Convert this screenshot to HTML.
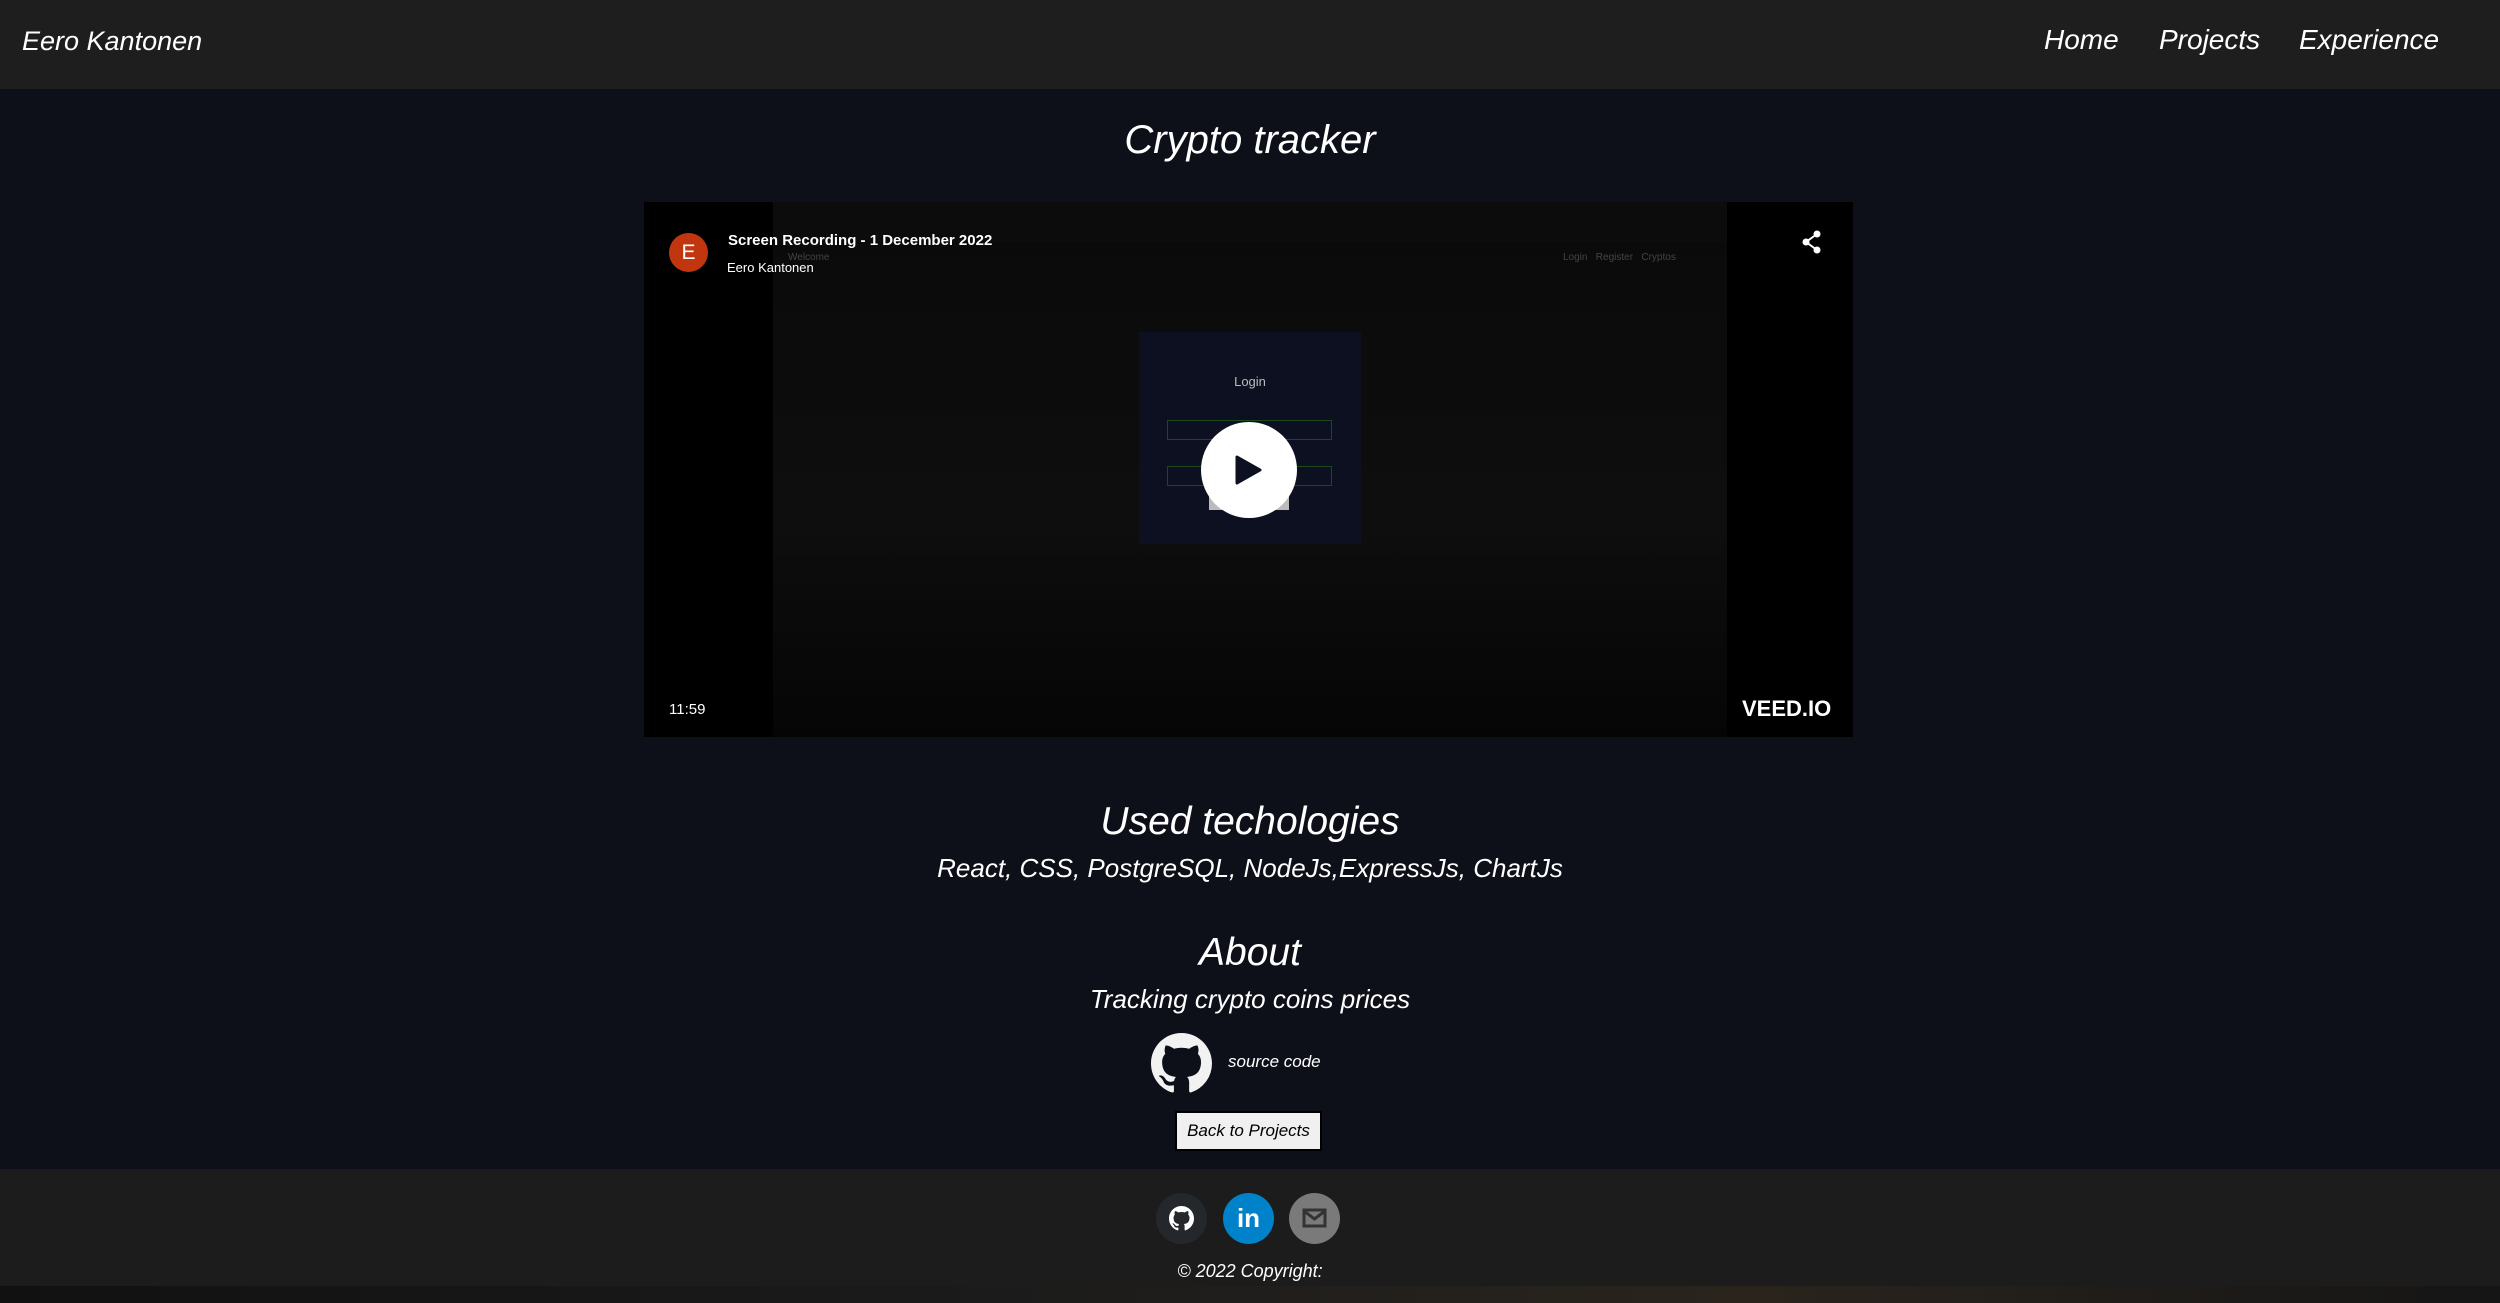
<!DOCTYPE html>
<html><head><meta charset="utf-8"><style>
*{margin:0;padding:0;box-sizing:border-box}
html,body{width:2500px;height:1303px;overflow:hidden;background:#0d1018;font-family:"Liberation Sans",sans-serif;color:#fff;font-style:italic}
.nav{position:absolute;left:0;top:0;width:2500px;height:89px;background:#1e1e1e}
.brand{position:absolute;left:22px;top:26px;font-size:27px}
.nav a{position:absolute;top:24px;font-size:28px;color:#fff;text-decoration:none}
.c{position:absolute;left:0;width:2500px;text-align:center}
.video{position:absolute;left:644px;top:202px;width:1209px;height:535px;background:#000;overflow:hidden}
.rec{position:absolute;left:129px;top:0;width:954px;height:535px;background:linear-gradient(#0a0a0a,#0e0e0e 60%,#050505)}
.footer{position:absolute;left:0;top:1169px;width:2500px;height:117px;background:#1c1c1c}
.task{position:absolute;left:0;top:1286px;width:2500px;height:17px;background:linear-gradient(90deg,#111 0%,#1b1b1b 40%,#2a241d 70%,#151515 100%)}
.ic{position:absolute;top:1193px;width:51px;height:51px;border-radius:50%}
</style></head><body>
<div class="nav"><div class="brand">Eero Kantonen</div>
<a style="left:2044px">Home</a><a style="left:2159px">Projects</a><a style="left:2299px">Experience</a></div>
<div class="c" style="top:118px;font-size:40px">Crypto tracker</div>
<div class="video">
 <div class="rec">
  <div style="position:absolute;left:0;top:0;width:954px;height:40px;background:#0c0c0c"></div>
  <div style="position:absolute;left:15px;top:50px;font-size:10px;color:#444;font-style:normal">Welcome</div>
  <div style="position:absolute;left:790px;top:50px;font-size:10px;color:#444;font-style:normal">Login &nbsp; Register &nbsp; Cryptos</div>
  <div style="position:absolute;left:366px;top:130px;width:222px;height:212px;background:#0d1020">
   <div style="position:absolute;left:0;width:222px;top:42px;text-align:center;font-size:13px;color:#bbb;font-style:normal">Login</div>
   <div style="position:absolute;left:28px;top:88px;width:165px;height:20px;border:1px solid #1a4a1a"></div>
   <div style="position:absolute;left:28px;top:134px;width:165px;height:20px;border:1px solid #1a4a1a"></div>
   <div style="position:absolute;left:70px;top:160px;width:80px;height:18px;background:#bbb"></div>
  </div>
 </div>
 <div style="position:absolute;left:25px;top:31px;width:39px;height:39px;border-radius:50%;background:#c1360f;text-align:center;line-height:39px;font-size:21px;font-style:normal">E</div>
 <div style="position:absolute;left:84px;top:30px;font-size:15px;font-weight:bold;font-style:normal">Screen Recording - 1 December 2022</div>
 <div style="position:absolute;left:83px;top:58px;font-size:13px;font-style:normal">Eero Kantonen</div>
 <svg style="position:absolute;left:1157px;top:28px" width="22" height="24" viewBox="0 0 22 24"><circle cx="16" cy="4" r="3.5" fill="#fff"/><circle cx="5" cy="12" r="3.5" fill="#fff"/><circle cx="16" cy="20" r="3.5" fill="#fff"/><path d="M16 4L5 12L16 20" stroke="#fff" stroke-width="2" fill="none"/></svg>
 <div style="position:absolute;left:557px;top:220px;width:96px;height:96px;border-radius:50%;background:#fff"></div>
 <svg style="position:absolute;left:589px;top:253px" width="30" height="30" viewBox="0 0 30 30"><path d="M4 2L27 15L4 28Z" fill="#0d1020" stroke="#0d1020" stroke-width="3" stroke-linejoin="round"/></svg>
 <div style="position:absolute;left:25px;top:499px;font-size:15px;font-style:normal">11:59</div>
 <div style="position:absolute;left:1098px;top:494px;font-size:22px;font-weight:bold;font-style:normal">VEED.IO</div>
</div>
<div class="c" style="top:800px;font-size:39px">Used techologies</div>
<div class="c" style="top:853px;font-size:26px">React, CSS, PostgreSQL, NodeJs,ExpressJs, ChartJs</div>
<div class="c" style="top:931px;font-size:39px">About</div>
<div class="c" style="top:984px;font-size:26px">Tracking crypto coins prices</div>
<svg style="position:absolute;left:1151px;top:1033px" width="61" height="61" viewBox="0 0 16 16"><path fill="#f2f2f2" d="M8 0C3.58 0 0 3.58 0 8c0 3.54 2.290 6.530 5.470 7.590.4.07.55-.17.55-.38 0-.19-.01-.82-.01-1.49-2.01.37-2.53-.49-2.69-.94-.09-.23-.48-.94-.82-1.13-.28-.15-.68-.52-.01-.53.63-.01 1.08.58 1.23.82.72 1.21 1.87.87 2.33.66.07-.52.28-.87.51-1.07-1.78-.2-3.64-.89-3.64-3.95 0-.87.31-1.59.82-2.15-.08-.2-.36-1.02.08-2.12 0 0 .67-.21 2.2.82.64-.18 1.32-.27 2-.27.68 0 1.36.09 2 .27 1.53-1.04 2.2-.82 2.2-.82.44 1.1.16 1.92.08 2.12.51.56.82 1.27.82 2.15 0 3.07-1.87 3.75-3.65 3.95.29.25.54.73.54 1.48 0 1.07-.01 1.93-.01 2.2 0 .21.15.46.55.38A8.013 8.013 0 0016 8c0-4.42-3.58-8-8-8z"/></svg>
<div style="position:absolute;left:1228px;top:1052px;font-size:17px">source code</div>
<div style="position:absolute;left:1175px;top:1111px;width:147px;height:40px;background:#f0f0f0;border:2px solid #000;color:#000;font-size:17px;text-align:center;line-height:36px">Back to Projects</div>
<div class="footer"></div>
<div class="ic" style="left:1156px;background:#24272b"><svg style="position:absolute;left:13px;top:13px" width="25" height="25" viewBox="0 0 16 16"><path fill="#fff" d="M8 0C3.58 0 0 3.58 0 8c0 3.54 2.29 6.53 5.47 7.59.4.07.55-.17.55-.38 0-.19-.01-.82-.01-1.49-2.01.37-2.53-.49-2.69-.94-.09-.23-.48-.94-.82-1.13-.28-.15-.68-.52-.01-.53.63-.01 1.08.58 1.23.82.72 1.21 1.87.87 2.33.66.07-.52.28-.87.51-1.07-1.78-.2-3.64-.89-3.64-3.95 0-.87.31-1.59.82-2.15-.08-.2-.36-1.02.08-2.12 0 0 .67-.21 2.2.82.64-.18 1.32-.27 2-.27.68 0 1.36.09 2 .27 1.53-1.04 2.2-.82 2.2-.82.44 1.1.16 1.92.08 2.12.51.56.82 1.27.82 2.15 0 3.07-1.87 3.75-3.65 3.95.29.25.54.73.54 1.48 0 1.07-.01 1.93-.01 2.2 0 .21.15.46.55.38A8.013 8.013 0 0016 8c0-4.42-3.58-8-8-8z"/></svg></div>
<div class="ic" style="left:1223px;background:#0082ca;text-align:center;line-height:51px;font-size:26px;font-weight:bold;font-style:normal">in</div>
<div class="ic" style="left:1289px;background:#7a7a7a"><svg style="position:absolute;left:13px;top:15px" width="25" height="20" viewBox="0 0 25 20"><rect x="2" y="2" width="21" height="16" fill="none" stroke="#333" stroke-width="3"/><path d="M2 3L12.5 11L23 3" fill="none" stroke="#333" stroke-width="3"/></svg></div>
<div class="c" style="top:1261px;font-size:18px">© 2022 Copyright:</div>
<div class="task"></div>
</body></html>
